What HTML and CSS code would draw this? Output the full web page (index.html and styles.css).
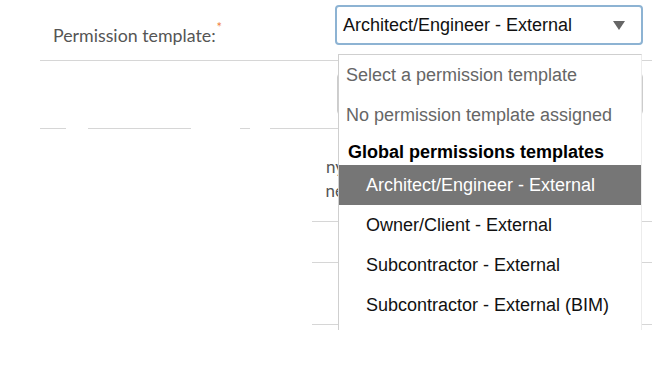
FILE: index.html
```html
<!DOCTYPE html>
<html lang="en">
<head>
    <meta charset="UTF-8">
    <meta name="viewport" content="width=device-width, initial-scale=1.0">
    <link rel="stylesheet" href="styles.css">
</head>
<body>
<div class="page">
    <div class="form">
        <!-- Permission template row -->
        <div class="row row-template">
            <label class="label">Permission template:<span class="req">*</span></label>
            <div class="select">
                <span class="select-value">Architect/Engineer - External</span>
                <span class="caret"></span>
            </div>
        </div>

        <!-- faded rows behind the open list -->
        <div class="row row-input">
            <div class="input-box"></div>
        </div>
        <div class="rule">
            <span class="seg" style="width:26px"></span>
            <span class="gap" style="width:22px"></span>
            <span class="seg" style="width:103px"></span>
            <span class="gap" style="width:49px"></span>
            <span class="seg" style="width:10px"></span>
            <span class="gap" style="width:20px"></span>
            <span class="seg" style="width:272px"></span>
        </div>
        <div class="row row-text">
            <div class="faint-text">
                <span>ny</span>
                <span>ne</span>
            </div>
        </div>
        <div class="rule rule-short"><span class="seg"></span></div>
        <div class="row row-plain"></div>
        <div class="rule rule-short"><span class="seg"></span></div>
        <div class="row row-tall"></div>
        <div class="rule rule-short"><span class="seg"></span></div>
    </div>

    <!-- open dropdown list -->
    <div class="dropdown">
        <div class="option muted">Select a permission template</div>
        <div class="option muted">No permission template assigned</div>
        <div class="group">Global permissions templates</div>
        <div class="option sub selected">Architect/Engineer - External</div>
        <div class="option sub">Owner/Client - External</div>
        <div class="option sub">Subcontractor - External</div>
        <div class="option sub">Subcontractor - External (BIM)</div>
    </div>
</div>
</body>
</html>
```

FILE: styles.css
```css
body {
    margin: 0;
    padding: 0;
    background-color: #fff;
    font-family: "Liberation Sans", Arial, sans-serif;
}

.page {
    position: relative;
    width: 652px;
    height: 381px;
    overflow: hidden;
}

.form {
    margin-left: 40px;
}

.row {
    display: flex;
    align-items: flex-start;
}

.row-template {
    height: 61px;
    border-bottom: 1px solid #d6d6d6;
    box-sizing: border-box;
    padding-top: 5px;
}

.label {
    width: 282px;
    padding-left: 13px;
    padding-top: 14px;
    font-family: Lato, "Open Sans", sans-serif;
    font-size: 17.8px;
    color: #555;
}

.req {
    color: #f08040;
    font-size: 13px;
    vertical-align: 10px;
    margin-left: 1px;
}

.select {
    width: 308px;
    height: 40px;
    box-sizing: border-box;
    border: 2px solid #8db3d3;
    border-radius: 4px;
    display: flex;
    align-items: center;
    padding: 0 16px 0 6px;
    font-size: 18px;
    color: #111;
}

.select-value {
    flex: 1;
}

.caret {
    width: 0;
    height: 0;
    border-left: 6px solid transparent;
    border-right: 6px solid transparent;
    border-top: 9px solid #666;
}

.row-input {
    height: 67px;
    padding-top: 12px;
    box-sizing: border-box;
    padding-left: 297px;
}

.input-box {
    width: 306px;
    height: 42px;
    box-sizing: border-box;
    border: 1px solid #ccc;
    border-radius: 4px;
}

.rule {
    display: flex;
    height: 1px;
}

.rule .seg {
    background-color: #d6d6d6;
    height: 1px;
}

.rule-short {
    padding-left: 272px;
}

.rule-short .seg {
    flex: 1;
}

.row-text {
    height: 92px;
    padding-left: 270px;
    padding-top: 26px;
    box-sizing: border-box;
}

.faint-text {
    display: flex;
    flex-direction: column;
    font-family: Lato, sans-serif;
    font-size: 17px;
    line-height: 24px;
    color: #555;
    text-align: right;
    width: 34px;
}

.row-plain {
    height: 40px;
}

.row-tall {
    height: 61px;
}

.dropdown {
    position: absolute;
    left: 338px;
    top: 54px;
    width: 304px;
    height: 276px;
    box-sizing: border-box;
    background-color: #fff;
    border: 1px solid #cfcfcf;
    border-bottom: none;
    border-right-color: #ececec;
    font-size: 18px;
}

.option {
    height: 40px;
    display: flex;
    align-items: center;
    padding-left: 7px;
    color: #111;
}

.option.muted {
    color: #666;
}

.option.sub {
    padding-left: 27px;
}

.option.selected {
    background-color: #767676;
    color: #fff;
}

.group {
    height: 30px;
    display: flex;
    align-items: flex-end;
    padding-left: 9px;
    padding-bottom: 2px;
    box-sizing: border-box;
    font-weight: bold;
    font-size: 18px;
    color: #000;
}
```
